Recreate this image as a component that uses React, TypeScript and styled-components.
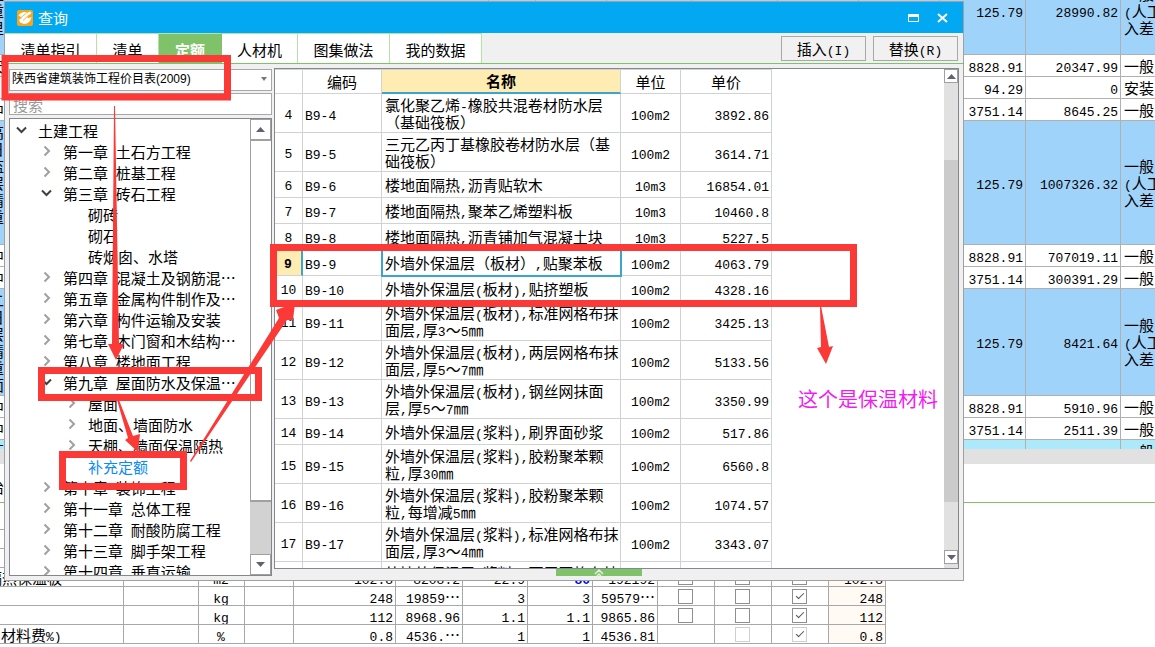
import React from 'react';
import styled, { createGlobalStyle, css } from 'styled-components';

const GlobalStyle = createGlobalStyle`
  *, *::before, *::after { box-sizing: border-box; }
  html, body { margin: 0; padding: 0; background: #fff; }
  body, button, input, select {
    font-family: 'Noto Sans CJK SC', 'Liberation Sans', sans-serif;
    font-size: 15px;
    line-height: 17px;
    color: #000;
    text-spacing-trim: space-all;
  }
  button { border: 0; padding: 0; margin: 0; background: none; cursor: pointer; }
  table { border-collapse: separate; border-spacing: 0; table-layout: fixed; }
`;

const RED = '#fb3937';
const GREEN = '#80c269';
const PALE_GREEN = '#b5e3a3';
const ACCENT = '#3ba5d0';
const CREAM = '#ffecb3';

/* Zero line height keeps the smaller face from stretching the 17px line. */
const Latin = styled.span`
  font-family: 'Liberation Mono', monospace;
  font-size: 13px;
  line-height: 0;
`;

/* Chinese keeps the interface face; ASCII runs use a half-width monospace. */
const Mixed = ({ text }: { text: string }) => (
  <>
    {text.split(/([\x20-\x7e]+)/).map((part, i) => (i % 2 ? <Latin key={i}>{part}</Latin> : part))}
  </>
);

const Page = styled.main`
  position: relative;
  min-height: 100vh;
  overflow: hidden;
`;

/* ---------- budget sheet behind the window ---------- */

const UpperPane = styled.div`
  height: 449px;
  overflow: hidden;
  display: flex;
  flex-direction: column;
`;

const SheetTable = styled.table`
  width: 100%;
  flex: none;
  margin-top: -32px;
`;

const SheetRow = styled.tr<{ $tone: string; $h: number }>`
  height: ${(p) => p.$h}px;
  background: ${(p) => p.$tone};
`;

const SheetCell = styled.td<{ $align?: string }>`
  padding: 0 2px 1px 3px;
  border-right: 1px solid #b0b0b0;
  border-bottom: 1px solid #b0b0b0;
  text-align: ${(p) => p.$align ?? 'right'};
  white-space: pre;
  overflow: hidden;
  &:last-child { border-right: 0; }
`;

const ScrolledText = styled.div`
  margin-left: -14px;
`;

const SheetScroll = styled.div`
  height: 15px;
  background: #e1e1e1;
`;

const DetailTabs = styled.div`
  margin-top: 8px;
  height: 31px;
  padding-top: 6px;
  border-bottom: 1px solid ${GREEN};
`;

const DetailTab = styled.button`
  display: block;
  margin-left: -11px;
`;

const DetailTable = styled.table`
  width: 886px;
`;

const DetailHead = styled.th`
  height: 27px;
  padding: 0;
  font-weight: 400;
  text-align: left;
  border-right: 1px solid #a8a8a8;
  border-bottom: 1px solid #a8a8a8;
`;

const DetailCell = styled.td<{ $align?: string; $cream?: boolean; $strong?: boolean }>`
  height: 19px;
  padding: 0 2px 0 1px;
  border-right: 1px solid #a8a8a8;
  border-bottom: 1px solid #a8a8a8;
  text-align: ${(p) => p.$align ?? 'right'};
  background: ${(p) => (p.$cream ? '#fffaf4' : '#fff')};
  white-space: nowrap;
  overflow: hidden;
  ${(p) => p.$strong && css`color: #0000f0; font-weight: 700;`}
`;

const CheckBox = styled.input`
  appearance: none;
  display: block;
  width: 15px;
  height: 15px;
  margin: 1px auto 0;
  border: 1px solid #8e8e8e;
  background: #fff;
  &:disabled { border-color: #cfcfcf; }
  &:checked::before {
    content: '';
    display: block;
    width: 8px;
    height: 4px;
    margin: 3px 0 0 3px;
    border-left: 1px solid #50505e;
    border-bottom: 1px solid #50505e;
    transform: rotate(-45deg);
  }
`;

/* ---------- query window ---------- */

const Window = styled.section`
  position: absolute;
  left: 4px;
  top: 1px;
  width: calc(100% - 195px);
  min-width: 800px;
  height: calc(100vh - 67px);
  min-height: 580px;
  display: flex;
  flex-direction: column;
  background: #f0f0f0;
  border: 1px solid #a0a0a0;
`;

const TitleBar = styled.header`
  flex: none;
  height: 31px;
  padding: 0 14px 0 12px;
  display: flex;
  align-items: center;
  background: #02a8f1;
`;

const Title = styled.h1`
  flex: 1;
  margin: 0 0 0 5px;
  color: #fff;
  font-size: 15px;
  font-weight: 400;
`;

const WindowButtons = styled.div`
  display: flex;
  gap: 17px;
  button { display: flex; }
`;

const Toolbar = styled.div`
  flex: none;
  height: 31px;
  display: flex;
  justify-content: space-between;
  border-bottom: 1px solid ${GREEN};
`;

const Tabs = styled.nav`
  display: flex;
  height: 30px;
`;

const Tab = styled.button<{ $w: number; $active?: boolean }>`
  width: ${(p) => p.$w}px;
  padding-top: 1px;
  color: ${(p) => (p.$active ? '#fff' : '#000')};
  background: ${(p) => (p.$active ? GREEN : '#fff')};
  font-weight: ${(p) => (p.$active ? 700 : 400)};
  border-top: 1px solid ${PALE_GREEN};
  border-right: 1px solid ${(p) => (p.$active ? GREEN : PALE_GREEN)};
`;

const Actions = styled.div`
  display: flex;
  gap: 7px;
  padding: 3px 5px 0 0;
`;

const ActionButton = styled.button`
  width: 85px;
  height: 25px;
  border: 1px solid #a8a8a8;
  background: #f1f1f1;
`;

const Body = styled.div`
  flex: 1;
  min-height: 0;
  display: flex;
  gap: 2px;
  padding: 4px;
`;

const Side = styled.aside`
  width: 263px;
  flex: none;
  display: flex;
  flex-direction: column;
  gap: 3px;
`;

const SelectWrap = styled.div`
  position: relative;
  height: 22px;
  svg { position: absolute; right: 5px; top: 9px; pointer-events: none; }
`;

const Catalog = styled.select`
  appearance: none;
  width: 100%;
  height: 22px;
  padding: 0 20px 0 2px;
  border: 1px solid #a8a8a8;
  border-radius: 0;
  background: #fff;
  font-family: 'Liberation Sans', 'Noto Sans CJK SC', sans-serif;
  font-size: 12px;
`;

const Search = styled.input`
  height: 22px;
  padding: 0 3px;
  border: 1px solid #a8a8a8;
  background: #fff;
  &::placeholder { color: #999; opacity: 1; }
`;

const TreeBox = styled.div`
  flex: 1;
  min-height: 0;
  display: flex;
  background: #fff;
  border: 1px solid #828790;
`;

const TreeList = styled.ul`
  flex: 1;
  min-width: 0;
  margin: 0;
  padding: 1px 0 0;
  list-style: none;
  overflow: hidden;
`;

const TreeItem = styled.button<{ $level: number; $current?: boolean }>`
  display: flex;
  align-items: center;
  width: 100%;
  height: 21px;
  padding-left: ${(p) => 4 + p.$level * 25}px;
  color: ${(p) => (p.$current ? '#0a8cf5' : '#000')};
  white-space: pre;
  text-align: left;
`;

const Twisty = styled.span`
  width: 24px;
  height: 14px;
  flex: none;
  svg { display: block; }
`;

const TreeScroll = styled.div`
  width: 21px;
  flex: none;
  display: flex;
  flex-direction: column;
  background: #d2d2d2;
`;

const ScrollArrow = styled.button<{ $h: number }>`
  flex: none;
  height: ${(p) => p.$h}px;
  display: flex;
  align-items: center;
  justify-content: center;
  background: #fff;
  border: 1px solid #a0a0a0;
`;

const TreeThumb = styled.div`
  height: 362px;
  background: #fff;
  border: 1px solid #a0a0a0;
  border-right: 0;
  border-bottom-width: 2px;
`;

const Spacer = styled.div`
  flex: 1;
`;

const Main = styled.div`
  flex: 1;
  min-width: 0;
  display: flex;
  flex-direction: column;
`;

const GridBox = styled.div`
  flex: 1;
  min-height: 0;
  display: flex;
  justify-content: space-between;
  background: #fff;
  border: 1px solid #828790;
  overflow: hidden;
`;

const Grid = styled.table`
  width: 497px;
  align-self: flex-start;
`;

const HeadCell = styled.th<{ $on?: boolean }>`
  height: 25px;
  padding: 0 0 1px;
  font-weight: ${(p) => (p.$on ? 700 : 400)};
  background: ${(p) => (p.$on ? CREAM : '#fff')};
  border-top: 1px solid #d2d2d2;
  border-right: 1px solid #d2d2d2;
  border-bottom: ${(p) => (p.$on ? `2px solid ${ACCENT}` : '1px solid #d2d2d2')};
`;

const GridRow = styled.tr<{ $tall: boolean }>`
  height: ${(p) => (p.$tall ? 39 : 26)}px;
`;

const cell = css`
  border-right: 1px solid #d2d2d2;
  border-bottom: 1px solid #d2d2d2;
`;

const IndexCell = styled.th<{ $on?: boolean }>`
  ${cell}
  padding: 0 0 2px;
  font-weight: ${(p) => (p.$on ? 700 : 400)};
  ${(p) => p.$on && css`background: ${CREAM}; border-right: 2px solid ${ACCENT};`}
`;

const NameCell = styled.td<{ $on?: boolean }>`
  ${cell}
  padding: 0 0 1px 3px;
  ${(p) => p.$on && css`outline: 2px solid ${ACCENT}; outline-offset: -1px;`}
`;

const ValueCell = styled.td<{ $align: string }>`
  ${cell}
  padding: 0 2px;
  text-align: ${(p) => p.$align};
`;

const GridScroll = styled.div`
  width: 14px;
  flex: none;
  display: flex;
  flex-direction: column;
  background: #e1e1e1;
  padding-bottom: 4px;
`;

const GridThumb = styled.div`
  height: 342px;
  margin-top: 77px;
  background: #cbcbcb;
`;

const Grip = styled.button`
  flex: none;
  width: 86px;
  height: 7px;
  margin-right: 35px;
  display: flex;
  justify-content: center;
  background: ${GREEN};
`;

const GripRow = styled.div`
  height: 7px;
  display: flex;
  justify-content: center;
`;

/* ---------- mark-up over the window ---------- */

const Marks = styled.svg`
  position: absolute;
  left: 0;
  top: 0;
  overflow: visible;
  pointer-events: none;
`;

const Note = styled.p`
  position: absolute;
  left: 798px;
  top: 386px;
  margin: 0;
  font-size: 20px;
  line-height: 26px;
  color: #f01cf0;
  white-space: nowrap;
`;

/* ---------- data ---------- */

const BLUE = '#a0d3fa';
const WHITE = '#fff';

const sheetRows: [string, number, string, string, string, string][] = [
  [BLUE, 87, '监\n重\n里', '125.79', '28990.82', '一般\n(人工\n入差'],
  [WHITE, 22, '安', '8828.91', '20347.99', '一般'],
  [WHITE, 22, '', '94.29', '0', '安装'],
  [WHITE, 22, '中', '3751.14', '8645.25', '一般'],
  [BLUE, 124, '高\n日\n监\n层\n精\n重\n5', '125.79', '1007326.32', '一般\n(人工\n入差'],
  [WHITE, 22, '中', '8828.91', '707019.11', '一般'],
  [WHITE, 22, '中', '3751.14', '300391.29', '一般'],
  [BLUE, 107, '二\n日\n层\n精\n重\n面', '125.79', '8421.64', '一般\n(人工\n入差'],
  [WHITE, 22, '中', '8828.91', '5910.96', '一般'],
  [WHITE, 22, '中', '3751.14', '2511.39', '一般'],
  ['#abe9fb', 22, '石', '', '', '一般'],
];

type Check = 'off' | 'on' | 'dim' | 'dimOn' | '';
const detailRows: { cells: string[]; checks: Check[]; last: string }[] = [
  { cells: ['', '', '', '', '', '', '', '', ''], checks: ['', '', ''], last: '' },
  { cells: ['', '', '', '', '', '', '', '', ''], checks: ['', '', ''], last: '' },
  { cells: ['隔热保温板', '', 'm2', '', '102.8', '8208.2', '22.9', '80', '192192'], checks: ['off', 'off', 'on'], last: '102.8' },
  { cells: ['', '', 'kg', '', '248', '19859…', '3', '3', '59579…'], checks: ['off', 'off', 'on'], last: '248' },
  { cells: ['', '', 'kg', '', '112', '8968.96', '1.1', '1.1', '9865.86'], checks: ['off', 'off', 'on'], last: '112' },
  { cells: ['材料费%)', '', '%', '', '0.8', '4536.…', '1', '1', '4536.81'], checks: ['', 'dim', 'dimOn'], last: '0.8' },
];

type Node = [number, 'open' | 'closed' | 'leaf', string];
const nodes: Node[] = [
  [0, 'open', '土建工程'],
  [1, 'closed', '第一章 土石方工程'],
  [1, 'closed', '第二章 桩基工程'],
  [1, 'open', '第三章 砖石工程'],
  [2, 'leaf', '砌砖'],
  [2, 'leaf', '砌石'],
  [2, 'leaf', '砖烟囱、水塔'],
  [1, 'closed', '第四章 混凝土及钢筋混…'],
  [1, 'closed', '第五章 金属构件制作及…'],
  [1, 'closed', '第六章 构件运输及安装'],
  [1, 'closed', '第七章 木门窗和木结构…'],
  [1, 'closed', '第八章 楼地面工程'],
  [1, 'open', '第九章 屋面防水及保温…'],
  [2, 'closed', '屋面'],
  [2, 'closed', '地面、墙面防水'],
  [2, 'closed', '天棚、墙面保温隔热'],
  [2, 'leaf', '补充定额'],
  [1, 'closed', '第十章 装饰工程'],
  [1, 'closed', '第十一章 总体工程'],
  [1, 'closed', '第十二章 耐酸防腐工程'],
  [1, 'closed', '第十三章 脚手架工程'],
  [1, 'closed', '第十四章 垂直运输'],
];

const items: [number, string, string, string, boolean][] = [
  [4, '氯化聚乙烯-橡胶共混卷材防水层（基础筏板）', '100m2', '3892.86', true],
  [5, '三元乙丙丁基橡胶卷材防水层（基础筏板）', '100m2', '3614.71', true],
  [6, '楼地面隔热,沥青贴软木', '10m3', '16854.01', false],
  [7, '楼地面隔热,聚苯乙烯塑料板', '10m3', '10460.8', false],
  [8, '楼地面隔热,沥青铺加气混凝土块', '10m3', '5227.5', false],
  [9, '外墙外保温层（板材）,贴聚苯板', '100m2', '4063.79', false],
  [10, '外墙外保温层(板材),贴挤塑板', '100m2', '4328.16', false],
  [11, '外墙外保温层(板材),标准网格布抹面层,厚3～5㎜', '100m2', '3425.13', true],
  [12, '外墙外保温层(板材),两层网格布抹面层,厚5～7㎜', '100m2', '5133.56', true],
  [13, '外墙外保温层(板材),钢丝网抹面层,厚5～7㎜', '100m2', '3350.99', true],
  [14, '外墙外保温层(浆料),刷界面砂浆', '100m2', '517.86', false],
  [15, '外墙外保温层(浆料),胶粉聚苯颗粒,厚30㎜', '100m2', '6560.8', true],
  [16, '外墙外保温层(浆料),胶粉聚苯颗粒,每增减5㎜', '100m2', '1074.57', true],
  [17, '外墙外保温层(浆料),标准网格布抹面层,厚3～4㎜', '100m2', '3343.07', true],
  [18, '外墙外保温层(浆料),两层网格布抹面层,厚5～7㎜', '', '', true],
];

const tabs: [string, number][] = [
  ['清单指引', 92],
  ['清单', 62],
  ['定额', 63],
  ['人材机', 76],
  ['图集做法', 92],
  ['我的数据', 92],
];

const Triangle = ({ up }: { up?: boolean }) => (
  <svg width="9" height="5" viewBox="0 0 9 5" aria-hidden="true">
    <path d={up ? 'M0 5 4.5 0 9 5z' : 'M0 0 4.5 5 9 0z'} fill="#62626e" />
  </svg>
);

const Chevron = ({ open }: { open: boolean }) =>
  open ? (
    <svg width="14" height="14" viewBox="0 0 14 14" aria-hidden="true">
      <path d="M3 3.500 7.500 8 12 3.500" fill="none" stroke="#404040" strokeWidth="2" />
    </svg>
  ) : (
    <svg width="14" height="14" viewBox="0 0 14 14" aria-hidden="true">
      <path d="M5.500 1.500 10 6 5.500 10.500" fill="none" stroke="#a0a0a0" strokeWidth="2" />
    </svg>
  );

const Sheet = () => (
  <UpperPane>
    <SheetTable>
      <colgroup>
        <col />
        {[47, 71, 85, 86, 81, 81, 86, 95, 34].map((w, i) => (
          <col key={i} width={w} />
        ))}
      </colgroup>
      <tbody>
        {sheetRows.map(([tone, h, name, a, b, kind], i) => (
          <SheetRow key={i} $tone={tone} $h={h}>
            <SheetCell $align="left">
              <ScrolledText>{name}</ScrolledText>
            </SheetCell>
            {[0, 1, 2, 3, 4, 5].map((n) => (
              <SheetCell key={n} />
            ))}
            <SheetCell><Mixed text={a} /></SheetCell>
            <SheetCell><Mixed text={b} /></SheetCell>
            <SheetCell $align="left">
              {kind.split('\n').map((line) => (
                <div key={line}><Mixed text={line} /></div>
              ))}
            </SheetCell>
          </SheetRow>
        ))}
      </tbody>
    </SheetTable>
  </UpperPane>
);

const checkNames = ['暂估', '甲供', '输出'];

const Detail = () => (
  <DetailTable>
    <colgroup>
      {[124, 75, 46, 49, 102, 67, 65, 65, 65, 57, 57, 57, 57].map((w, i) => (
        <col key={i} width={w} />
      ))}
    </colgroup>
    <thead>
      <tr>
        <DetailHead><ScrolledText>名</ScrolledText></DetailHead>
        {Array.from({ length: 12 }, (_, i) => <DetailHead key={i} />)}
      </tr>
    </thead>
    <tbody>
      {detailRows.map((row, r) => (
        <tr key={r}>
          {row.cells.map((text, i) => (
            <DetailCell key={i} $align={i === 0 ? 'left' : i === 2 ? 'center' : 'right'} $strong={r === 2 && i === 7}>
              {r === 2 && i === 0 ? <ScrolledText>{text}</ScrolledText> : <Mixed text={text} />}
            </DetailCell>
          ))}
          {row.checks.map((state, i) => (
            <DetailCell key={`c${i}`}>
              {state && (
                <CheckBox
                  type="checkbox"
                  aria-label={checkNames[i]}
                  defaultChecked={state === 'on' || state === 'dimOn'}
                  disabled={state.startsWith('dim')}
                />
              )}
            </DetailCell>
          ))}
          <DetailCell $cream><Mixed text={row.last} /></DetailCell>
        </tr>
      ))}
    </tbody>
  </DetailTable>
);

const Logo = () => (
  <svg width="16" height="16" viewBox="0 0 16 16" aria-hidden="true">
    <rect width="16" height="16" rx="2" fill="#f9a51a" />
    <path d="M1.500 5.500C3 3 6 1.500 8.500 2L10 3 13 1.500 14.500 3 10 7.500 12 8 14.500 7C14 11 11 14 7 14L3 12.500 2 9.500 5 8z" fill="#fff" />
    <path d="M4 7.500 9 3.500M6 10.500 12.500 4.500" stroke="#f9b54a" strokeWidth="1" fill="none" />
  </svg>
);

const Annotations = () => (
  <>
    <Marks width="960" height="500" viewBox="0 0 960 500" aria-hidden="true">
      <g fill="none" stroke={RED} strokeWidth="7">
        <rect x="5" y="58.5" width="222.5" height="38.5" />
        <rect x="41.5" y="370.5" width="217" height="27" />
        <rect x="62.5" y="454.5" width="121" height="32" />
        <rect x="273.5" y="247.5" width="580" height="56" />
      </g>
      <g fill={RED}>
        <path d="M114 106h1L119 344h5L116 360 108 344h4z" />
        <path d="M117 400h2L133 436l7-2-2 18-13-12 3-2z" />
        <path d="M190 461 279 318 276 310 295 303 293 320 287 320 191 462z" />
        <path d="M820 306h1L829 347l4-1-7 18-9-16 4-1z" />
      </g>
    </Marks>
    <Note>这个是保温材料</Note>
  </>
);

export default function App() {
  return (
    <Page lang="zh-CN">
      <GlobalStyle />
      <Sheet />
      <SheetScroll />
      <DetailTabs>
        <DetailTab>治</DetailTab>
      </DetailTabs>
      <Detail />

      <Window aria-label="查询">
        <TitleBar>
          <Logo />
          <Title>查询</Title>
          <WindowButtons>
            <button aria-label="最大化">
              <svg width="12" height="10" viewBox="0 0 12 10">
                <path d="M.5 1.5h10v7H.5z" fill="none" stroke="#fff" />
                <path d="M0 1h11v3H0z" fill="#fff" />
              </svg>
            </button>
            <button aria-label="关闭">
              <svg width="12" height="10" viewBox="0 0 12 10">
                <path d="M1 1 10 9M10 1 1 9" stroke="#fff" strokeWidth="2" />
              </svg>
            </button>
          </WindowButtons>
        </TitleBar>
        <Toolbar>
          <Tabs>
            {tabs.map(([label, w]) => (
              <Tab key={label} $w={w} $active={label === '定额'}>{label}</Tab>
            ))}
          </Tabs>
          <Actions>
            <ActionButton><Mixed text="插入(I)" /></ActionButton>
            <ActionButton><Mixed text="替换(R)" /></ActionButton>
          </Actions>
        </Toolbar>
        <Body>
          <Side>
            <SelectWrap>
              <Catalog aria-label="定额库">
                <option>陕西省建筑装饰工程价目表(2009)</option>
              </Catalog>
              <svg width="6" height="4" viewBox="0 0 6 4" aria-hidden="true">
                <path d="M0 0h6L3 4z" fill="#777" />
              </svg>
            </SelectWrap>
            <Search placeholder="搜索" aria-label="搜索" />
            <TreeBox>
              <TreeList>
                {nodes.map(([level, state, label]) => (
                  <li key={label}>
                    <TreeItem $level={level} $current={label === '补充定额'}>
                      <Twisty>{state !== 'leaf' && <Chevron open={state === 'open'} />}</Twisty>
                      <span><Mixed text={label} /></span>
                    </TreeItem>
                  </li>
                ))}
              </TreeList>
              <TreeScroll>
                <ScrollArrow $h={21} aria-label="向上滚动"><Triangle up /></ScrollArrow>
                <TreeThumb />
                <Spacer />
                <ScrollArrow $h={21} aria-label="向下滚动"><Triangle /></ScrollArrow>
              </TreeScroll>
            </TreeBox>
          </Side>
          <Main>
            <GridBox>
              <Grid>
                <colgroup>
                  {[28, 79, 239, 60, 91].map((w, i) => (
                    <col key={i} width={w} />
                  ))}
                </colgroup>
                <thead>
                  <tr>
                    <HeadCell />
                    <HeadCell>编码</HeadCell>
                    <HeadCell $on>名称</HeadCell>
                    <HeadCell>单位</HeadCell>
                    <HeadCell>单价</HeadCell>
                  </tr>
                </thead>
                <tbody>
                  {items.map(([n, name, unit, price, tall]) => (
                    <GridRow key={n} $tall={tall}>
                      <IndexCell $on={n === 9}><Mixed text={String(n)} /></IndexCell>
                      <ValueCell $align="left"><Mixed text={`B9-${n}`} /></ValueCell>
                      <NameCell $on={n === 9}><Mixed text={name} /></NameCell>
                      <ValueCell $align="center"><Mixed text={unit} /></ValueCell>
                      <ValueCell $align="right"><Mixed text={price} /></ValueCell>
                    </GridRow>
                  ))}
                </tbody>
              </Grid>
              <GridScroll>
                <ScrollArrow $h={14} aria-label="向上滚动"><Triangle up /></ScrollArrow>
                <GridThumb />
                <Spacer />
                <ScrollArrow $h={14} aria-label="向下滚动"><Triangle /></ScrollArrow>
              </GridScroll>
            </GridBox>
            <GripRow>
              <Grip aria-label="展开">
                <svg width="10" height="7" viewBox="0 0 10 7" aria-hidden="true">
                  <path d="M1 5 5 1 9 5M3 7 5 5 7 7" fill="none" stroke="#dff2d8" strokeWidth="1.500" />
                </svg>
              </Grip>
            </GripRow>
          </Main>
        </Body>
      </Window>
      <Annotations />
    </Page>
  );
}
